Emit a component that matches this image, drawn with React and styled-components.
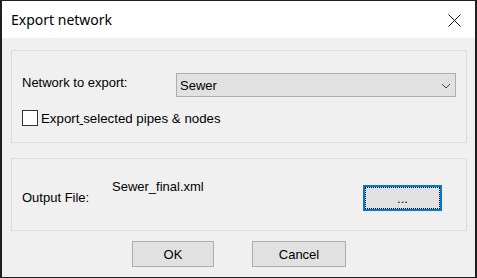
import React from 'react'
import styled, { createGlobalStyle } from 'styled-components';

const GlobalStyle = createGlobalStyle`
  html, body {
    margin: 0;
    padding: 0;
    background: #1f1f1f;
  }
  body {
    width: 477px;
    height: 278px;
    overflow: hidden;
  }
`

function ChevronDown() {
  return (
    <svg width="10" height="6" viewBox="0 0 10 6">
      <path d="M1 1 L5 5 L9 1" fill="none" stroke="#444" strokeWidth="1" />
    </svg>
  )
}

function CloseIcon() {
  return (
    <svg width="13" height="13" viewBox="0 0 13 13">
      <path d="M0.5 0.5 L12.5 12.5 M12.5 0.5 L0.5 12.5" stroke="#111" strokeWidth="1" />
    </svg>
  )
}

function App() {
  return (
    <>
      <GlobalStyle />
      <Window>
        <TitleBar>
          <Title>Export network</Title>
          <CloseButton><CloseIcon /></CloseButton>
        </TitleBar>
        <Body>
          <NetworkGroup>
            <Row>
              <FieldLabel>Network to export:</FieldLabel>
              <Combo>
                <span>Sewer</span>
                <ChevronDown />
              </Combo>
            </Row>
            <CheckRow>
              <CheckBox />
              <CheckText>Export<Accel>&nbsp;</Accel>selected pipes &amp; nodes</CheckText>
            </CheckRow>
          </NetworkGroup>
          <OutputGroup>
            <OutputLabel>Output File:</OutputLabel>
            <FileName>Sewer_final.xml</FileName>
            <Button focused width={79}>...</Button>
          </OutputGroup>
          <ButtonRow>
            <Button width={82}>OK</Button>
            <Button width={94}>Cancel</Button>
          </ButtonRow>
        </Body>
      </Window>
    </>
  )
}

export default App;

const Window = styled.div`
  margin: 1px 2px 1px 2px;
  width: 473px;
  height: 276px;
  background: #f0f0f0;
  display: flex;
  flex-direction: column;
  font-family: "Liberation Sans", Arial, sans-serif;
  font-size: 13px;
  line-height: 15px;
  color: #000;
`

const TitleBar = styled.div`
  height: 37px;
  background: #fff;
  display: flex;
  align-items: center;
  justify-content: space-between;
  padding: 0 14px 0 9px;
`

const Title = styled.div`
  font-family: "Noto Sans", "Open Sans", sans-serif;
  font-size: 14px;
  line-height: 20px;
  color: #000;
  margin-top: 1px;
`

const CloseButton = styled.div`
  display: flex;
  margin-top: 1px;
`

const Body = styled.div`
  flex: 1;
  display: flex;
  flex-direction: column;
  padding: 12px 8px 0 9px;
`

const NetworkGroup = styled.div`
  height: 93px;
  box-sizing: border-box;
  border: 1px solid #dcdcdc;
  padding: 22px 10px 0 10px;
`

const Row = styled.div`
  display: flex;
  align-items: flex-start;
`

const FieldLabel = styled.div`
  width: 154px;
  flex: none;
  margin-top: 2px;
`

const Combo = styled.div`
  width: 280px;
  height: 24px;
  box-sizing: border-box;
  border: 1px solid #adadad;
  background: #e1e1e1;
  display: flex;
  align-items: center;
  justify-content: space-between;
  padding: 0 4px 0 3px;
  svg {
    margin-top: 1px;
  }
`

const CheckRow = styled.div`
  display: flex;
  align-items: center;
  margin-top: 13px;
`

const CheckBox = styled.div`
  width: 16px;
  height: 16px;
  box-sizing: border-box;
  border: 1px solid #333;
  background: #fff;
`

const CheckText = styled.div`
  margin-left: 3px;
  font-size: 13.3px;
`

const Accel = styled.span`
  text-decoration: underline;
`

const OutputGroup = styled.div`
  margin-top: 15px;
  height: 73px;
  box-sizing: border-box;
  border: 1px solid #dcdcdc;
  display: flex;
  align-items: flex-start;
  padding: 20px 24px 0 10px;
`

const OutputLabel = styled.div`
  width: 90px;
  flex: none;
  margin-top: 11px;
`

const FileName = styled.div`
  flex: 1;
`

const Button = styled.div`
  width: ${p => p.width}px;
  height: 26px;
  box-sizing: border-box;
  flex: none;
  background: #e1e1e1;
  border: ${p => (p.focused ? '2px solid #0078d7' : '1px solid #adadad')};
  outline: ${p => (p.focused ? '1px dotted #000' : 'none')};
  outline-offset: -3px;
  display: flex;
  align-items: center;
  justify-content: center;
  margin-top: ${p => (p.focused ? '6px' : '0')};
`

const ButtonRow = styled.div`
  display: flex;
  justify-content: center;
  gap: 38px;
  margin-top: 10px;
`
